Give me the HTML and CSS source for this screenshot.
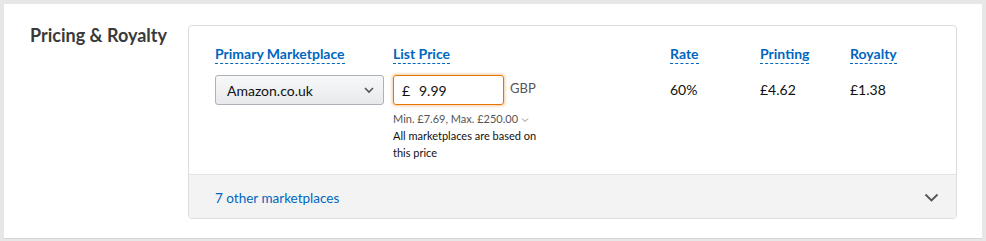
FILE: index.html
```html
<!DOCTYPE html>
<html lang="en">

<head>
    <meta charset="UTF-8">
    <meta name="viewport" content="width=device-width, initial-scale=1.0">
    <title>Pricing &amp; Royalty</title>
    <link rel="stylesheet" href="styles.css">
</head>

<body>
    <div class="panel">
        <h2 class="section-title">Pricing &amp; Royalty</h2>

        <div class="pricing-box">
            <div class="pricing-grid">
                <div class="col-head"><span class="tip">Primary Marketplace</span></div>
                <div class="col-head"><span class="tip">List Price</span></div>
                <div class="col-head"><span class="tip">Rate</span></div>
                <div class="col-head"><span class="tip">Printing</span></div>
                <div class="col-head"><span class="tip">Royalty</span></div>

                <div class="cell">
                    <div class="select">
                        <span>Amazon.co.uk</span>
                        <svg width="12" height="8" viewBox="0 0 12 8"><path d="M2 2 L6 6 L10 2" fill="none" stroke="#555" stroke-width="1.6"/></svg>
                    </div>
                </div>
                <div class="cell">
                    <div class="price-row">
                        <div class="price-input">
                            <span class="currency">£</span>
                            <span>9.99</span>
                        </div>
                        <span class="code">GBP</span>
                    </div>
                    <div class="hint">Min. £7.69, Max. £250.00
                        <svg width="8" height="6" viewBox="0 0 8 6"><path d="M1 1.5 L4 4.5 L7 1.5" fill="none" stroke="#888" stroke-width="1"/></svg>
                    </div>
                    <div class="note">All marketplaces are based on<br>this price</div>
                </div>
                <div class="cell value">60%</div>
                <div class="cell value">£4.62</div>
                <div class="cell value">£1.38</div>
            </div>

            <div class="pricing-footer">
                <a href="#" class="link">7 other marketplaces</a>
                <svg width="15" height="9" viewBox="0 0 15 9"><path d="M1.5 1.5 L7.5 7.5 L13.5 1.5" fill="none" stroke="#555" stroke-width="1.8"/></svg>
            </div>
        </div>
    </div>
</body>

</html>
```

FILE: styles.css
```css
body {
    font-family: 'Lato', 'Liberation Sans', sans-serif;
    margin: 0;
    padding: 4px 4px 0 4px;
    background-color: #e7e7e7;
    color: #111;
}

.panel {
    background-color: #fff;
    height: 235px;
    box-sizing: border-box;
    border-bottom: 1px solid #d5d5d5;
    display: flex;
    padding: 21px 25px 0 26px;
}

.section-title {
    margin: 0;
    width: 158px;
    font-size: 18px;
    font-weight: bold;
    color: #3a3a3a;
    line-height: 20px;
}

.pricing-box {
    flex: 1;
    height: 194px;
    box-sizing: border-box;
    border: 1px solid #ddd;
    border-radius: 4px;
    display: flex;
    flex-direction: column;
    overflow: hidden;
}

.pricing-grid {
    flex: 1;
    display: grid;
    grid-template-columns: 178px 277px 90px 90px 1fr;
    grid-template-rows: 30px auto;
    padding: 19px 26px 0 26px;
}

.col-head {
    font-size: 14px;
    font-weight: bold;
    color: #0066c0;
}

.tip {
    border-bottom: 1px dashed #0066c0;
    padding-bottom: 1px;
}

.select {
    width: 169px;
    height: 30px;
    box-sizing: border-box;
    border: 1px solid #adb1b8;
    border-radius: 3px;
    background: linear-gradient(#f7f8fa, #e7e9ec);
    display: flex;
    align-items: center;
    justify-content: space-between;
    padding: 0 8px 0 11px;
    font-size: 14px;
}

.price-row {
    display: flex;
    align-items: center;
    gap: 6px;
}

.price-input {
    width: 111px;
    height: 30px;
    box-sizing: border-box;
    border: 1px solid #e77600;
    border-radius: 3px;
    box-shadow: 0 0 3px 1px rgba(228, 121, 17, 0.4);
    display: flex;
    align-items: center;
    padding-left: 8px;
    font-size: 14px;
}

.currency {
    width: 17px;
}

.code {
    font-size: 13px;
    color: #555;
    margin-bottom: 4px;
}

.hint {
    margin-top: 5px;
    font-size: 11px;
    color: #555;
    line-height: 17px;
}

.note {
    font-size: 11px;
    line-height: 17px;
    color: #111;
}

.value {
    font-size: 14px;
    line-height: 30px;
}

.pricing-footer {
    height: 44px;
    background-color: #f3f3f3;
    border-top: 1px solid #e3e3e3;
    display: flex;
    align-items: center;
    justify-content: space-between;
    padding: 2px 17px 0 26px;
    box-sizing: border-box;
}

.link {
    color: #0066c0;
    text-decoration: none;
    font-size: 13.5px;
}
```
